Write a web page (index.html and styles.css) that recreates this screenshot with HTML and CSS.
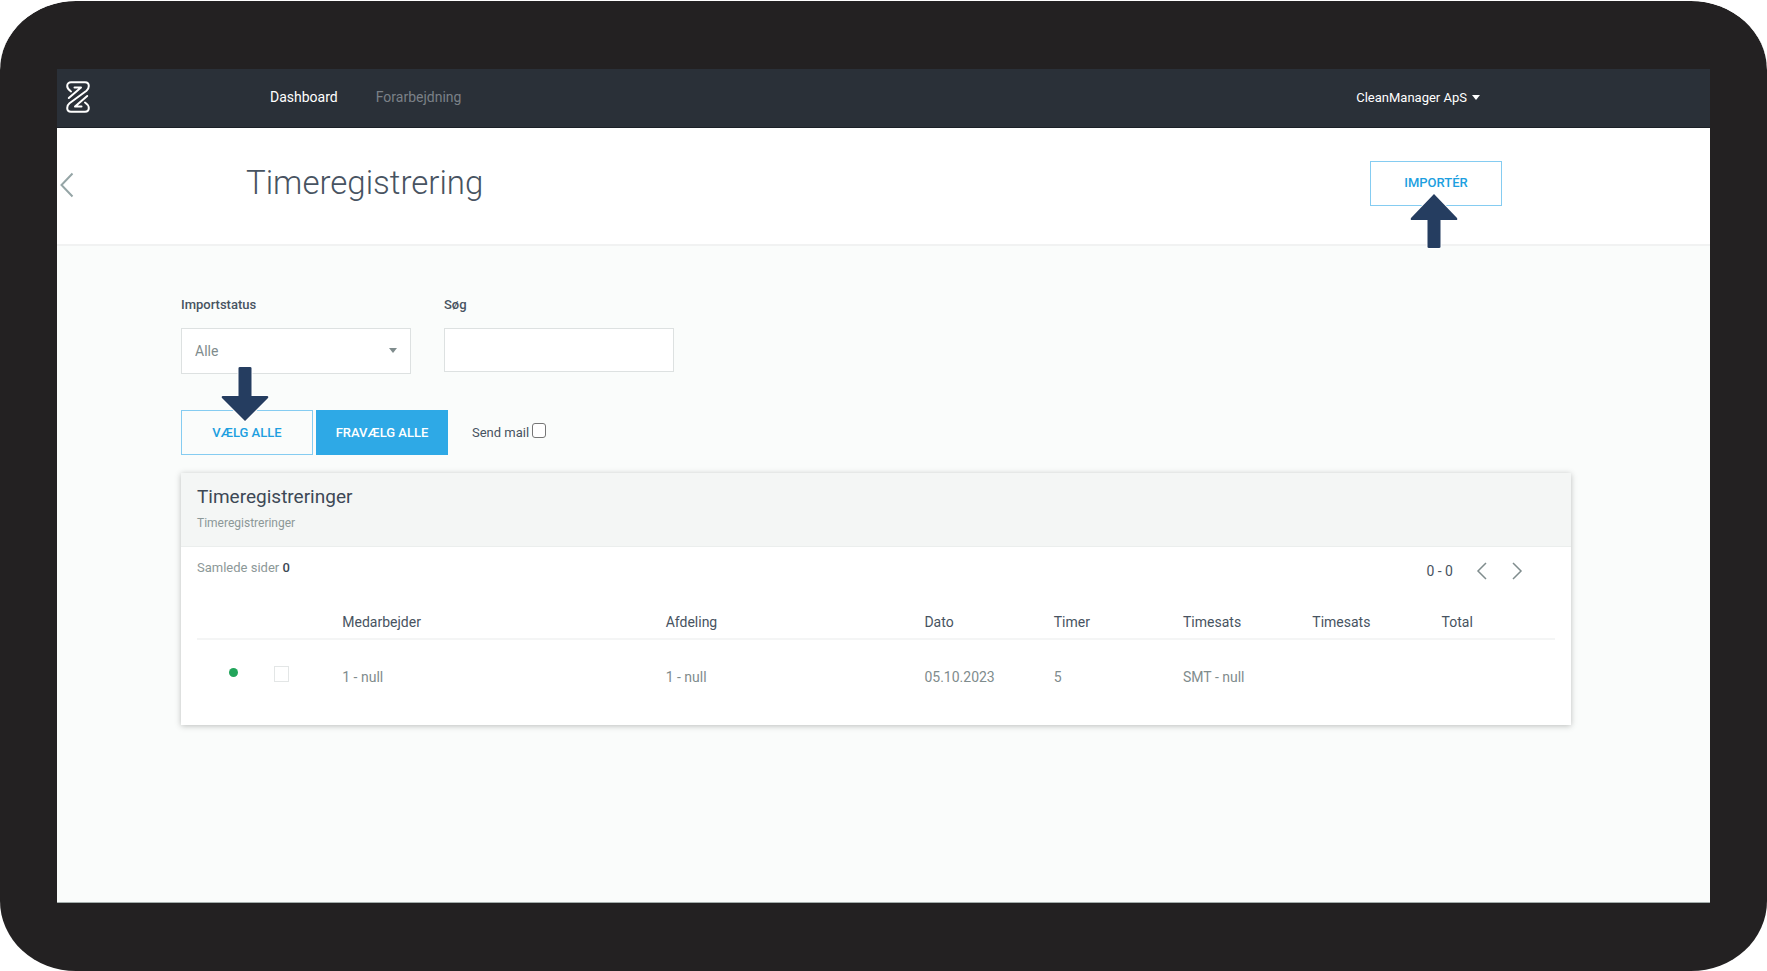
FILE: index.html
```html
<!DOCTYPE html>
<html lang="da">
<head>
<meta charset="utf-8">
<meta name="viewport" content="width=device-width, initial-scale=1">
<title>Timeregistrering</title>
<link rel="stylesheet" href="styles.css">
</head>
<body>
<div class="tablet">
  <div class="screen">
    <header class="navbar">
      <a class="logo" href="#" aria-label="Forside">
        <svg width="24" height="32" viewBox="0 0 24 32" fill="none" stroke="#fff" stroke-width="2" stroke-linecap="round" stroke-linejoin="round">
          <path d="M5 10.500 C2 8.500 1.200 7 1.200 5 C1.200 2.500 3 1.200 5 1.200 H19 C21.500 1.200 22.800 2.500 22.800 5 C22.800 7 22 8.500 20.500 9.700 L3.500 22.300 C2 23.500 1.200 25 1.200 27 C1.200 29.500 2.500 30.800 5 30.800 H19 C21 30.800 22.800 29.500 22.800 27 C22.800 25 22 23.500 19 21.500"/>
          <path d="M8.500 6.500 H15 L2.800 17"/>
          <path d="M21.200 15 L9 25.500 H15.500"/>
        </svg>
      </a>
      <nav class="menu">
        <a class="menu-link active" href="#">Dashboard</a>
        <a class="menu-link" href="#">Forarbejdning</a>
      </nav>
      <button class="account" type="button">CleanManager ApS <span class="caret"></span></button>
    </header>

    <section class="page-head">
      <a class="back" href="#" aria-label="Tilbage">
        <svg width="14" height="26" viewBox="0 0 14 26" fill="none" stroke="#95a5a6" stroke-width="2"><path d="M12.500 1.500 L1.500 13 L12.500 24.500"/></svg>
      </a>
      <h1 class="title">Timeregistrering</h1>
      <button class="btn btn-outline pointed" type="button">IMPORTÉR
        <svg class="arrow arrow-up" width="52" height="58" viewBox="0 0 52 58"><path d="M26 2 L49 26 Q50 28 48 28 H32.500 V55 Q32.500 56 31 56 H21 Q19.500 56 19.500 55 V28 H4 Q2 28 3 26 Z"/></svg>
      </button>
    </section>

    <main class="content">
      <form class="filters">
        <div class="field">
          <label class="label" for="status">Importstatus</label>
          <span class="select-box">
            <select class="control select" id="status"><option>Alle</option></select>
          </span>
        </div>
        <div class="field">
          <label class="label" for="search">Søg</label>
          <input class="control search" id="search" type="text">
        </div>
      </form>

      <div class="actions">
        <button class="btn btn-outline pointed" type="button">VÆLG ALLE
          <svg class="arrow arrow-down" width="52" height="58" viewBox="0 0 52 58"><path d="M26 56 L49 33 Q50 31 48 31 H32.500 V3 Q32.500 2 31 2 H21 Q19.500 2 19.500 3 V31 H4 Q2 31 3 33 Z"/></svg>
        </button>
        <button class="btn btn-solid" type="button">FRAVÆLG ALLE</button>
        <label class="mail" for="mail">Send mail<input class="mail-check" id="mail" type="checkbox"></label>
      </div>

      <section class="card">
        <div class="card-head">
          <h2 class="card-title">Timeregistreringer</h2>
          <p class="card-sub">Timeregistreringer</p>
        </div>
        <div class="card-body">
          <div class="summary">
            <p class="pages">Samlede sider <b class="count">0</b></p>
            <div class="pager">
              <span class="range">0 - 0</span>
              <button class="page-btn" type="button" aria-label="Forrige">
                <svg width="12" height="18" viewBox="0 0 12 18" fill="none" stroke="#7f8c8d" stroke-width="1.500"><path d="M10 1 L2 9 L10 17"/></svg>
              </button>
              <button class="page-btn" type="button" aria-label="Næste">
                <svg width="12" height="18" viewBox="0 0 12 18" fill="none" stroke="#7f8c8d" stroke-width="1.500"><path d="M2 1 L10 9 L2 17"/></svg>
              </button>
            </div>
          </div>
          <table class="table">
            <colgroup><col class="c1"><col class="c1"><col class="c5"><col class="c4"><col class="c2"><col class="c2"><col class="c2"><col class="c2"><col class="c2"></colgroup>
            <thead>
              <tr><th></th><th></th><th>Medarbejder</th><th>Afdeling</th><th>Dato</th><th>Timer</th><th>Timesats</th><th>Timesats</th><th>Total</th></tr>
            </thead>
            <tbody>
              <tr>
                <td class="dot-cell"><span class="dot"></span></td>
                <td class="check-cell"><input class="row-check" type="checkbox" aria-label="Vælg række"></td>
                <td>1 - null</td><td>1 - null</td><td>05.10.2023</td><td>5</td><td>SMT - null</td><td></td><td></td>
              </tr>
            </tbody>
          </table>
        </div>
      </section>
    </main>
  </div>
</div>
</body>
</html>
```
FILE: styles.css
```css
* {
  box-sizing: border-box;
}

body {
  margin: 0;
  background: #fff;
  color: #475361;
  font-family: Roboto, "Liberation Sans", sans-serif;
  font-size: 14px;
}

a {
  text-decoration: none;
}

h1, h2, p {
  margin: 0;
}

button, input, select {
  margin: 0;
  font: inherit;
}

.tablet {
  display: flex;
  min-height: 100vh;
  padding: 68px 57px;
  border-top: 1px solid #fff;
  border-radius: 76px / 70px;
  background: #232122;
  background-clip: padding-box;
}

.screen {
  flex: 1;
  display: flex;
  flex-direction: column;
  background: #fafcfb;
  border-bottom: 1px solid #a3adab;
}

.navbar {
  display: flex;
  align-items: center;
  height: 59px;
  padding: 0 230px 2px 9px;
  background: #2a3038;
  border-bottom: 1px solid #1b2027;
}

.logo {
  display: flex;
  width: 204px;
}

.menu {
  display: flex;
  flex: 1;
  gap: 38px;
}

.menu-link {
  color: #7b8087;
}

.menu-link.active {
  color: #fff;
}

.account {
  display: flex;
  align-items: center;
  gap: 5px;
  padding: 0;
  border: 0;
  background: none;
  color: #fff;
  font-size: 13px;
}

.caret {
  border: 4px solid transparent;
  border-top: 5px solid #fff;
  border-bottom: 0;
}

.page-head {
  display: flex;
  align-items: center;
  height: 118px;
  padding: 0 208px 6px 3px;
  background: #fff;
  border-bottom: 2px solid #f1f2f2;
}

.back {
  display: flex;
  width: 186px;
  padding-top: 4px;
}

.title {
  flex: 1;
  font-size: 33px;
  font-weight: 300;
  line-height: 40px;
}

.btn {
  width: 132px;
  height: 45px;
  padding: 0;
  border: 1px solid #2ea9e6;
  font-size: 13px;
  font-weight: 500;
  line-height: 20px;
}

.btn-outline {
  background: transparent;
  border-color: #85ccf1;
  color: #1d9fe0;
}

.btn-solid {
  background: #2ea9e6;
  color: #fff;
}

.pointed {
  position: relative;
}

.arrow {
  position: absolute;
  left: 37px;
  fill: #253d60;
  stroke: #fff;
  stroke-width: 2;
  paint-order: stroke;
}

.arrow-up {
  top: 30px;
}

.arrow-down {
  bottom: 31px;
}

.content {
  padding: 49px 139px 60px 124px;
}

.filters {
  display: flex;
  align-items: flex-start;
  gap: 33px;
}

.field {
  display: flex;
  flex-direction: column;
  width: 230px;
  gap: 13px;
}

.label {
  font-size: 13px;
  font-weight: 500;
  line-height: 20px;
}

.select-box {
  position: relative;
  display: flex;
}

.select-box::after {
  content: "";
  position: absolute;
  top: 20px;
  right: 14px;
  border: 4px solid transparent;
  border-top: 5px solid #7f8c8d;
  border-bottom: 0;
}

.control {
  width: 100%;
  height: 44px;
  padding: 0 13px;
  border: 1px solid #dde1e1;
  border-radius: 0;
  background: #fff;
  color: #7f8c8d;
}

.select {
  height: 46px;
  appearance: none;
}

.actions {
  display: flex;
  align-items: center;
  gap: 3px;
  margin: 36px 0 18px;
}

.mail {
  display: flex;
  gap: 3px;
  padding-left: 21px;
  line-height: 20px;
  font-size: 13px;
}

.mail-check, .row-check {
  appearance: none;
  width: 14px;
  height: 15px;
  background: #fff;
  border: 1px solid #767676;
  border-radius: 3px;
}

.card {
  background: #fff;
  box-shadow: 0 1px 6px rgba(0, 0, 0, 0.25);
}

.card-head {
  height: 74px;
  padding: 12px 16px;
  background: #f4f6f5;
  border-bottom: 1px solid #ebeeed;
}

.card-title {
  font-size: 19px;
  font-weight: 400;
  line-height: 24px;
  color: #3d4855;
}

.card-sub {
  padding-top: 4px;
  font-size: 12px;
  line-height: 20px;
  color: #8c9898;
}

.card-body {
  padding: 11px 16px 12px;
}

.summary {
  display: flex;
  justify-content: space-between;
  height: 47px;
}

.pages {
  font-size: 13px;
  line-height: 20px;
  color: #8c9898;
}

.count {
  font-weight: 500;
  color: #3d4855;
}

.pager {
  display: flex;
  align-items: center;
  gap: 23px;
  height: 26px;
  padding-right: 32px;
}

.page-btn {
  display: flex;
  padding: 0;
  border: 0;
  background: none;
}

.table {
  width: 100%;
  table-layout: fixed;
  border-collapse: collapse;
}

.c1 {
  width: 4.76%;
}

.c2 {
  width: 9.52%;
}

.c4 {
  width: 19.05%;
}

.c5 {
  width: 23.81%;
}

.table th {
  height: 34px;
  padding: 0 0 0 16px;
  border-bottom: 2px solid #f4f5f5;
  text-align: left;
  font-weight: 400;
}

.table td {
  height: 74px;
  padding: 0 0 0 16px;
  color: #7f8c8d;
}

.table .dot-cell {
  padding: 0 0 8px 32px;
}

.dot {
  display: block;
  width: 9px;
  height: 9px;
  border-radius: 50%;
  background: #22a55b;
}

.table .check-cell {
  padding: 0 0 5px 12px;
}

.row-check {
  display: block;
  width: 15px;
  height: 16px;
  border-color: #e3e6e6;
  border-radius: 0;
}
```
